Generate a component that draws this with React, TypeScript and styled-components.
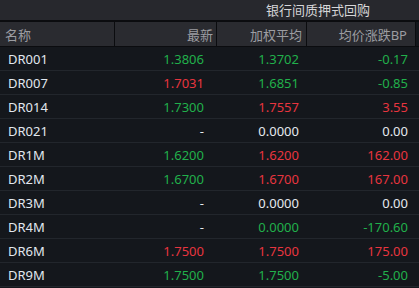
import React from "react";
import styled, { createGlobalStyle } from "styled-components";

type Tone = "up" | "down" | "flat";

type Row = {
  name: string;
  last: string;
  lastTone: Tone;
  avg: string;
  avgTone: Tone;
  bp: string;
  bpTone: Tone;
};

const rows: Row[] = [
  { name: "DR001", last: "1.3806", lastTone: "down", avg: "1.3702", avgTone: "down", bp: "-0.17", bpTone: "down" },
  { name: "DR007", last: "1.7031", lastTone: "up", avg: "1.6851", avgTone: "down", bp: "-0.85", bpTone: "down" },
  { name: "DR014", last: "1.7300", lastTone: "down", avg: "1.7557", avgTone: "up", bp: "3.55", bpTone: "up" },
  { name: "DR021", last: "-", lastTone: "flat", avg: "0.0000", avgTone: "flat", bp: "0.00", bpTone: "flat" },
  { name: "DR1M", last: "1.6200", lastTone: "down", avg: "1.6200", avgTone: "up", bp: "162.00", bpTone: "up" },
  { name: "DR2M", last: "1.6700", lastTone: "down", avg: "1.6700", avgTone: "up", bp: "167.00", bpTone: "up" },
  { name: "DR3M", last: "-", lastTone: "flat", avg: "0.0000", avgTone: "flat", bp: "0.00", bpTone: "flat" },
  { name: "DR4M", last: "-", lastTone: "flat", avg: "0.0000", avgTone: "down", bp: "-170.60", bpTone: "down" },
  { name: "DR6M", last: "1.7500", lastTone: "up", avg: "1.7500", avgTone: "up", bp: "175.00", bpTone: "up" },
  { name: "DR9M", last: "1.7500", lastTone: "down", avg: "1.7500", avgTone: "down", bp: "-5.00", bpTone: "down" },
];

const toneColor: Record<Tone, string> = {
  up: "#e8353f",
  down: "#21b04b",
  flat: "#e6e9ee",
};

const GlobalStyle = createGlobalStyle`
  html, body {
    margin: 0;
    padding: 0;
    background: #14171c;
  }
  body {
    font-family: "Noto Sans", "Noto Sans CJK SC", sans-serif;
    font-size: 13px;
  }
`;

const COLS = "115px 102px 90px 109px 3px";

const Board = styled.div`
  width: 419px;
  height: 288px;
  overflow: hidden;
  background: #14171c;
`;

const TopBar = styled.div`
  display: grid;
  grid-template-columns: 217px 1fr;
  height: 20px;
  background: #27282d;
  border-bottom: 2px solid #0b0c0f;
`;

const Title = styled.div`
  grid-column: 2;
  display: flex;
  align-items: center;
  justify-content: center;
  color: #d6d6d8;
  line-height: 20px;
`;

const HeaderRow = styled.div`
  display: grid;
  grid-template-columns: ${COLS};
  height: 24px;
  background: #2a2b30;
  border-bottom: 1px solid #0b0c0f;
`;

const HeadCell = styled.div<{ $align: "left" | "right"; $pad: number }>`
  display: flex;
  align-items: center;
  justify-content: ${({ $align }) => ($align === "left" ? "flex-start" : "flex-end")};
  padding: ${({ $align, $pad }) => ($align === "left" ? `0 0 0 ${$pad}px` : `0 ${$pad}px 0 0`)};
  border-right: 1px solid #0b0c0f;
  color: #9c9da2;
  white-space: nowrap;
`;

const Gutter = styled.div`
  background: #14171c;
`;

const DataRow = styled.div`
  display: grid;
  grid-template-columns: ${COLS};
  height: 23px;
  border-bottom: 1px solid #22262c;
`;

const NameCell = styled.div`
  display: flex;
  align-items: center;
  padding-left: 8px;
  color: #e1e7ef;
`;

const ValueCell = styled.div<{ $tone: Tone; $pad: number }>`
  display: flex;
  align-items: center;
  justify-content: flex-end;
  padding-right: ${({ $pad }) => $pad}px;
  color: ${({ $tone }) => toneColor[$tone]};
  white-space: nowrap;
`;

export default function App() {
  return (
    <>
      <GlobalStyle />
      <Board>
        <TopBar>
          <Title>银行间质押式回购</Title>
        </TopBar>
        <HeaderRow>
          <HeadCell $align="left" $pad={5}>名称</HeadCell>
          <HeadCell $align="right" $pad={3}>最新</HeadCell>
          <HeadCell $align="right" $pad={4}>加权平均</HeadCell>
          <HeadCell $align="right" $pad={8}>均价涨跌BP</HeadCell>
          <Gutter />
        </HeaderRow>
        {rows.map((r) => (
          <DataRow key={r.name}>
            <NameCell>{r.name}</NameCell>
            <ValueCell $tone={r.lastTone} $pad={13}>{r.last}</ValueCell>
            <ValueCell $tone={r.avgTone} $pad={8}>{r.avg}</ValueCell>
            <ValueCell $tone={r.bpTone} $pad={8}>{r.bp}</ValueCell>
            <div />
          </DataRow>
        ))}
      </Board>
    </>
  );
}
